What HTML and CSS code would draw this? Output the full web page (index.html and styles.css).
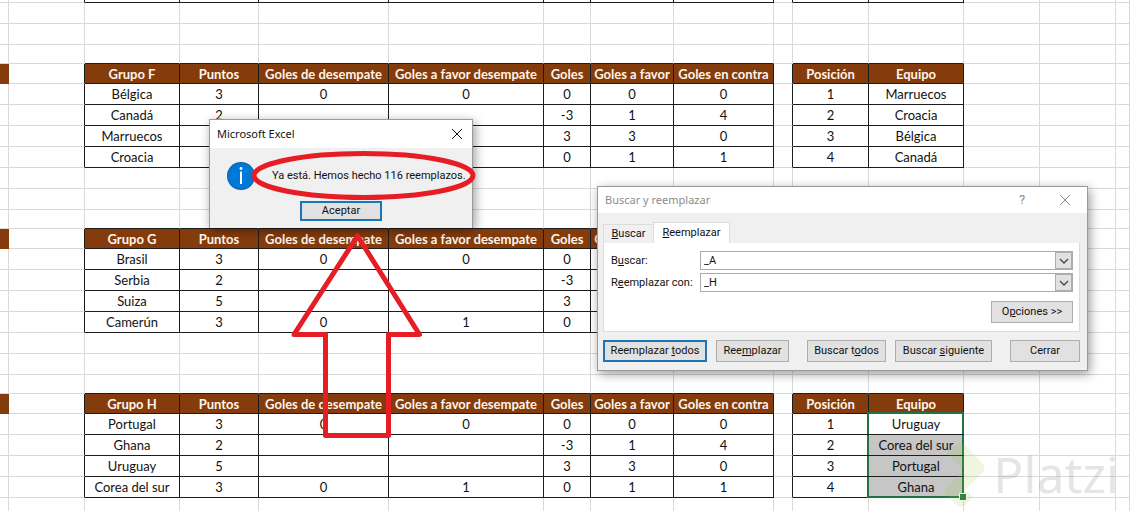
FILE: index.html
```html
<!DOCTYPE html>
<html lang="es">
<head>
<meta charset="utf-8">
<title>Grupos - Excel</title>
<link rel="stylesheet" href="styles.css">
</head>
<body>
<main class="workspace">
<table class="sheet">
<colgroup><col class="c-edge"><col class="c-m"><col class="c-l"><col class="c-points"><col class="c-tie"><col class="c-tiefavor"><col class="c-goals"><col class="c-favor"><col class="c-against"><col class="c-gap"><col class="c-m"><col class="c-l"><col class="c-m"><col class="c-m"><col></colgroup>
<tbody>
<tr class="data last sliver"><td><td><td><td><td><td><td><td><td><td><td><td><td><td><td></tr>
<tr><td><td><td><td><td><td><td><td><td><td><td><td><td><td><td></tr>
<tr><td><td><td><td><td><td><td><td><td><td><td><td><td><td><td></tr>
<tr class="above"><td><td><td><td><td><td><td><td><td><td><td><td><td><td><td></tr>
<tr class="head"><td><td><th>Grupo F<th>Puntos<th>Goles de desempate<th>Goles a favor desempate<th>Goles<th>Goles a favor<th>Goles en contra<td><th>Posición<th>Equipo<td><td><td></tr>
<tr class="data"><td><td><td>Bélgica<td>3<td>0<td>0<td>0<td>0<td>0<td><td>1<td>Marruecos<td><td><td></tr>
<tr class="data"><td><td><td>Canadá<td>2<td><td><td>-3<td>1<td>4<td><td>2<td>Croacia<td><td><td></tr>
<tr class="data"><td><td><td>Marruecos<td><td><td><td>3<td>3<td>0<td><td>3<td>Bélgica<td><td><td></tr>
<tr class="data"><td><td><td>Croacia<td><td><td><td>0<td>1<td>1<td><td>4<td>Canadá<td><td><td></tr>
<tr><td><td><td><td><td><td><td><td><td><td><td><td><td><td><td></tr>
<tr><td><td><td><td><td><td><td><td><td><td><td><td><td><td><td></tr>
<tr class="above"><td><td><td><td><td><td><td><td><td><td><td><td><td><td><td></tr>
<tr class="head"><td><td><th>Grupo G<th>Puntos<th>Goles de desempate<th>Goles a favor desempate<th>Goles<th>Goles a favor<th><td><th><th><td><td><td></tr>
<tr class="data"><td><td><td>Brasil<td>3<td>0<td>0<td>0<td><td><td><td><td><td><td><td></tr>
<tr class="data"><td><td><td>Serbia<td>2<td><td><td>-3<td><td><td><td><td><td><td><td></tr>
<tr class="data"><td><td><td>Suiza<td>5<td><td><td>3<td><td><td><td><td><td><td><td></tr>
<tr class="data"><td><td><td>Camerún<td>3<td>0<td>1<td>0<td><td><td><td><td><td><td><td></tr>
<tr><td><td><td><td><td><td><td><td><td><td><td><td><td><td><td></tr>
<tr><td><td><td><td><td><td><td><td><td><td><td><td><td><td><td></tr>
<tr class="above"><td><td><td><td><td><td><td><td><td><td><td><td><td><td><td></tr>
<tr class="head"><td><td><th>Grupo H<th>Puntos<th>Goles de desempate<th>Goles a favor desempate<th>Goles<th>Goles a favor<th>Goles en contra<td><th>Posición<th>Equipo<td><td><td></tr>
<tr class="data"><td><td><td>Portugal<td>3<td>0<td>0<td>0<td>0<td>0<td><td>1<td class="sel first">Uruguay<td><td><td></tr>
<tr class="data"><td><td><td>Ghana<td>2<td><td><td>-3<td>1<td>4<td><td>2<td class="sel">Corea del sur<td><td><td></tr>
<tr class="data"><td><td><td>Uruguay<td>5<td><td><td>3<td>3<td>0<td><td>3<td class="sel">Portugal<td><td><td></tr>
<tr class="data"><td><td><td>Corea del sur<td>3<td>0<td>1<td>0<td>1<td>1<td><td>4<td class="sel end">Ghana<td><td><td></tr>
<tr><td><td><td><td><td><td><td><td><td><td><td><td><td><td><td></tr>
</tbody>
</table>

<div class="watermark">
<svg width="56" height="68" viewBox="0 0 56 68" aria-hidden="true"><path d="M27 4Q31 1 35 5L53 24Q56 28 53 32L35 50L43 57L35 65Q31 68 27 65L13 51L34 30L17 13Z" fill="#98ca3f"/></svg>
<span>Platzi</span>
</div>

<section class="window message" role="dialog" aria-labelledby="msg-title">
<header class="titlebar">
<h2 id="msg-title">Microsoft Excel</h2>
<button class="icon-btn" aria-label="Cerrar mensaje"><svg width="12" height="12" viewBox="0 0 12 12"><path d="M1 1L11 11M11 1L1 11" stroke="currentColor" fill="none"/></svg></button>
</header>
<div class="message-body">
<svg class="info" width="28" height="28" viewBox="0 0 28 28" aria-hidden="true"><circle cx="14" cy="14" r="14" fill="#0f5fae"/><circle cx="14" cy="14" r="13" fill="#0078d7"/><circle cx="14" cy="6.500" r="1.400" fill="#fff"/><path d="M14 9.500V22" stroke="#fff" stroke-width="2"/></svg>
<p>Ya está. Hemos hecho 116 reemplazos.</p>
</div>
<footer><button class="btn primary accept">Aceptar</button></footer>
</section>

<section class="window replace" role="dialog" aria-labelledby="rep-title">
<header class="titlebar inactive">
<h2 id="rep-title">Buscar y reemplazar</h2>
<button class="icon-btn help" aria-label="Ayuda">?</button>
<button class="icon-btn" aria-label="Cerrar ventana"><svg width="12" height="12" viewBox="0 0 12 12"><path d="M1 1L11 11M11 1L1 11" stroke="currentColor" fill="none"/></svg></button>
</header>
<div class="replace-body">
<div class="tabs"><button class="tab"><u>B</u>uscar</button><button class="tab active"><u>R</u>eemplazar</button></div>
<div class="panel">
<div class="field"><label for="find">B<u>u</u>scar:</label><div class="combo"><input id="find" type="text" value="_A"><button aria-label="Historial de búsqueda"><svg width="10" height="6" viewBox="0 0 10 6"><path d="M1 1L5 5L9 1" fill="none" stroke="#444" stroke-width="1.300"/></svg></button></div></div>
<div class="field"><label for="with">R<u>e</u>emplazar con:</label><div class="combo"><input id="with" type="text" value="_H"><button aria-label="Historial de reemplazo"><svg width="10" height="6" viewBox="0 0 10 6"><path d="M1 1L5 5L9 1" fill="none" stroke="#444" stroke-width="1.300"/></svg></button></div></div>
<button class="btn options">O<u>p</u>ciones &gt;&gt;</button>
</div>
<div class="actions">
<div class="pair"><button class="btn primary w-all">Reemplazar <u>t</u>odos</button><button class="btn w-one">Ree<u>m</u>plazar</button></div>
<div class="pair"><button class="btn w-find">Buscar t<u>o</u>dos</button><button class="btn w-next">Buscar <u>s</u>iguiente</button></div>
<button class="btn w-close">Cerrar</button>
</div>
</div>
</section>

<svg class="marks" width="500" height="450" viewBox="0 0 500 450" fill="none" stroke="#e71d25" stroke-width="5" aria-hidden="true">
<ellipse cx="363.500" cy="175.500" rx="109.500" ry="22"/>
<path d="M357.500 236L419.500 334.500H388.500V435.500H325.500V334.500H294Z" stroke-linejoin="round"/>
</svg>
</main>
</body>
</html>
```
FILE: styles.css
```css
* { box-sizing: border-box; }
body { margin: 0; background: #fff; }
.workspace { position: relative; height: 100vh; overflow: hidden; }

.sheet {
  width: 100%;
  table-layout: fixed;
  border-collapse: separate;
  border-spacing: 0;
  font: 13px/18px Lato, Carlito, sans-serif;
  color: #111;
  text-align: center;
}
.c-edge { width: 9px; }
.c-m { width: 76px; }
.c-l { width: 95px; }
.c-points { width: 79px; }
.c-tie { width: 130px; }
.c-tiefavor { width: 155px; }
.c-goals { width: 47px; }
.c-favor { width: 83px; }
.c-against { width: 100px; }
.c-gap { width: 19px; }

.sheet tr { height: 21px; }
.sheet td, .sheet th {
  padding: 0;
  border: 0 solid #d9d9d9;
  border-width: 0 1px 1px 0;
  white-space: nowrap;
}
.sheet .sliver { height: 3px; }
.sheet .above { height: 19px; }
.sheet .head { height: 20px; }
.sheet th { background: #843c0c; color: #fff4ea; font-weight: 700; }
.head td:first-child { background: #843c0c; border-color: #843c0c; }
.data td:nth-child(n+3):nth-child(-n+9),
.data td:nth-child(11), .data td:nth-child(12),
.sheet th { border-color: #1c1c1c; }
.head td:nth-child(2), .data td:nth-child(2),
.head td:nth-child(10), .data td:nth-child(10) { border-right-color: #1c1c1c; }
.above td:nth-child(n+3):nth-child(-n+9),
.above td:nth-child(11), .above td:nth-child(12) { border-bottom-color: #1c1c1c; }

.sheet .sel { position: relative; background: #c6c6c6; }
.sheet .sel.first { background: #fff; }
.sel::before {
  content: "";
  position: absolute;
  inset: 0 -1px 0 -2px;
  border: 0 solid #217346;
  border-width: 0 2px;
}
.sel.first::before { top: -2px; border-top-width: 2px; }
.sel.end::before { bottom: -1px; border-bottom-width: 2px; }
.sel.end::after {
  content: "";
  position: absolute;
  right: -3px;
  bottom: -3px;
  width: 6px;
  height: 6px;
  background: #217346;
  outline: 1px solid #fff;
}

.watermark {
  position: absolute;
  right: 11px;
  bottom: 3px;
  display: flex;
  align-items: center;
  gap: 7px;
  opacity: 0.16;
  color: #666;
  font: 50px/56px "Noto Sans", sans-serif;
}

.window {
  position: absolute;
  display: flex;
  flex-direction: column;
  background: #f0f0f0;
  color: #111;
  font: 11px/16px Roboto, "Noto Sans", sans-serif;
  border: 1px solid #9a9a9a;
  box-shadow: 2px 3px 10px rgba(0, 0, 0, 0.4);
}
.window button, .window input { font: inherit; color: inherit; }
.titlebar {
  display: flex;
  align-items: center;
  height: 28px;
  padding: 0 8px;
  background: #fff;
}
.titlebar h2 { flex: 1; margin: 0; font: 11px/16px "Noto Sans", sans-serif; }
.replace .titlebar { padding: 0 15px 0 7px; }
.titlebar.inactive { color: #8c8c8c; }
.icon-btn {
  display: flex;
  align-items: center;
  justify-content: center;
  width: 14px;
  height: 20px;
  padding: 0;
  border: 0;
  background: none;
}
.window .help { margin-right: 29px; font-size: 13px; }
.btn {
  height: 22px;
  padding: 0;
  border: 1px solid #adadad;
  background: #e1e1e1;
  white-space: nowrap;
}
.btn.primary { border: 2px solid #1b75b5; }

.message { left: 209px; top: 119px; width: 264px; height: 109px; border-bottom: 0; }
.message .titlebar { padding-left: 7px; }
.message-body { display: flex; align-items: center; gap: 17px; padding: 14px 0 0 17px; }
.message p { margin: 0; white-space: nowrap; }
.message footer { display: flex; justify-content: center; padding-top: 11px; }
.message .btn { width: 82px; height: 20px; line-height: 14px; }

.replace { left: 597px; top: 186px; width: 491px; height: 185px; }
.replace-body { padding: 8px 7px 8px 5px; }
.tabs { display: flex; align-items: flex-end; height: 22px; }
.tab {
  height: 19px;
  width: 50px;
  padding: 0;
  border: 1px solid #dcdcdc;
  border-width: 1px 0 0 1px;
  background: #f0f0f0;
}
.tab.active {
  width: 77px;
  height: 21px;
  border-right-width: 1px;
  background: #fff;
}
.panel {
  display: flex;
  flex-direction: column;
  gap: 3px;
  height: 89px;
  padding: 8px 6px 8px 7px;
  border: 1px solid #dcdcdc;
  border-top: 0;
  background: #fff;
}
.field { display: flex; align-items: center; height: 19px; }
.field label { width: 89px; white-space: nowrap; }
.combo { display: flex; flex: 1; height: 19px; border: 1px solid #ababab; }
.combo input { flex: 1; min-width: 0; padding: 0 3px; border: 0; background: #fff; }
.combo button {
  display: flex;
  align-items: center;
  justify-content: center;
  width: 17px;
  padding: 0;
  border: 1px solid #adadad;
  background: #e1e1e1;
}
.options { align-self: flex-end; width: 82px; margin-top: 6px; flex: none; }
.actions { display: flex; justify-content: space-between; padding-top: 8px; }
.pair { display: flex; gap: 9px; }
.w-all { width: 104px; }
.w-one { width: 73px; }
.w-find { width: 79px; }
.w-next { width: 97px; }
.w-close { width: 70px; }

.marks { position: absolute; left: 0; top: 0; pointer-events: none; }
```
